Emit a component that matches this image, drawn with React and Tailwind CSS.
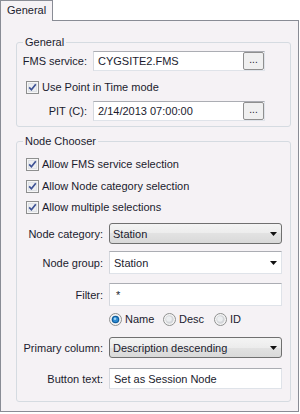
import React from 'react';

const CheckBox = () => (
  <svg width="13" height="13" viewBox="0 0 13 13" className="shrink-0">
    <rect x="0.5" y="0.5" width="12" height="12" fill="#f6f6f6" stroke="#8e8f8f" />
    <rect x="2" y="2" width="9" height="9" fill="#dfe2e7" />
    <rect x="3" y="3" width="7" height="7" fill="#eceef1" />
    <path d="M3.2 6.4 L5.4 8.8 L9.8 3.2" fill="none" stroke="#3d5295" strokeWidth="1.7" />
  </svg>
);

const Radio = ({ checked }) => (
  <svg width="13" height="13" viewBox="0 0 13 13" className="shrink-0">
    <circle cx="6.5" cy="6.5" r="6" fill="#f4f4f4" stroke="#8e8f8f" />
    {checked ? (
      <>
        <circle cx="6.5" cy="6.5" r="3.8" fill="#0f5d9e" />
        <circle cx="6.5" cy="6.5" r="2.6" fill="#2f8ad0" />
        <circle cx="6" cy="5.8" r="1.3" fill="#9fd6f7" />
      </>
    ) : (
      <>
        <circle cx="6.5" cy="6.5" r="4.2" fill="#d4d6da" />
        <circle cx="6" cy="6" r="2.8" fill="#eceef0" />
      </>
    )}
  </svg>
);

const Arrow = () => (
  <svg width="7" height="4" viewBox="0 0 7 4" className="mr-[4px] shrink-0">
    <polygon points="0,0 7,0 3.5,4" fill="#111" />
  </svg>
);

const Browse = () => (
  <div className="w-[21px] h-[18px] border border-[#8f8f8f] rounded-[2px] bg-[#f0f0f0] flex items-center justify-center text-[10px] leading-none pb-[2px]">
    ...
  </div>
);

const TextBox = ({ value, width, height, browse, pl = 'pl-[4px]' }) => (
  <div
    className={`${width} ${height} flex items-center bg-white border border-[#dfe3e9] border-t-[#abadb3] border-l-[#d5d8de]`}
  >
    <span className={`flex-1 ${pl} whitespace-nowrap`}>{value}</span>
    {browse && <Browse />}
  </div>
);

const Select = ({ value }) => (
  <div className="w-[173px] h-[21px] flex items-center rounded-[3px] border border-[#707070] bg-[linear-gradient(#f4f4f4,#ececec_50%,#e2e2e2_50%,#d9d9d9)]">
    <span className="flex-1 pl-[3px] whitespace-nowrap">{value}</span>
    <Arrow />
  </div>
);

const CheckRow = ({ label, className }) => (
  <div className={`${className} h-[14px] flex items-center pl-[9px]`}>
    <CheckBox />
    <span className="ml-[3px] whitespace-nowrap">{label}</span>
  </div>
);

const Field = ({ label, className, children }) => (
  <div className={`${className} flex items-center`}>
    <span className="w-[86px] text-right whitespace-nowrap">{label}</span>
    <div className="ml-[6px]">{children}</div>
  </div>
);

export default function App() {
  return (
    <div className="w-[300px] h-[414px] bg-white font-['Liberation_Sans',Arial,sans-serif] text-[11px] leading-[14px] text-[#1b1b2e]">
      {/* tab strip */}
      <div className="flex h-[20px]">
        <div className="relative z-10 h-[21px] w-[53px] border border-b-0 border-[#898c95] bg-[#f5f2f5] pl-[6px] pt-[2px]">
          General
        </div>
      </div>

      <div className="w-[299px] h-[392px] border border-[#898c95] bg-[#f5f2f5] pt-[14px]">
        {/* General group */}
        <fieldset className="ml-[15px] w-[275px] border border-[#d5dbe1] rounded-[3px] pb-[5px]">
          <legend className="ml-[6px] px-[2px]">General</legend>
          <div className="mt-[2px] flex items-center">
            <span className="w-[70px] text-right whitespace-nowrap">FMS service:</span>
            <div className="ml-[6px]">
              <TextBox value="CYGSITE2.FMS" width="w-[172px]" height="h-[20px]" browse />
            </div>
          </div>
          <CheckRow className="mt-[9px]" label="Use Point in Time mode" />
          <div className="mt-[7px] flex items-center">
            <span className="w-[70px] text-right whitespace-nowrap">PIT (C):</span>
            <div className="ml-[6px]">
              <TextBox value="2/14/2013 07:00:00" width="w-[172px]" height="h-[20px]" browse />
            </div>
          </div>
        </fieldset>

        {/* Node Chooser group */}
        <fieldset className="mt-[7px] ml-[15px] w-[275px] border border-[#d5dbe1] rounded-[3px] pb-[12px]">
          <legend className="ml-[6px] px-[2px]">Node Chooser</legend>
          <CheckRow className="mt-[9px]" label="Allow FMS service selection" />
          <CheckRow className="mt-[8px]" label="Allow Node category selection" />
          <CheckRow className="mt-[7px]" label="Allow multiple selections" />

          <Field className="mt-[9px]" label="Node category:">
            <Select value="Station" />
          </Field>

          <Field className="mt-[7px]" label="Node group:">
            <div className="w-[173px] h-[23px] flex items-center bg-white border border-[#dfe3e9] border-t-[#abadb3] border-l-[#d5d8de]">
              <span className="flex-1 pl-[4px]">Station</span>
              <Arrow />
            </div>
          </Field>

          <Field className="mt-[9px]" label="Filter:">
            <TextBox value="*" width="w-[173px]" height="h-[23px]" pl="pl-[6px]" />
          </Field>

          <div className="mt-[6px] h-[14px] flex items-center pl-[92px]">
            <div className="w-[54px] flex items-center">
              <Radio checked />
              <span className="ml-[3px]">Name</span>
            </div>
            <div className="w-[51px] flex items-center">
              <Radio />
              <span className="ml-[3px]">Desc</span>
            </div>
            <div className="flex items-center">
              <Radio />
              <span className="ml-[3px]">ID</span>
            </div>
          </div>

          <Field className="mt-[11px]" label="Primary column:">
            <Select value="Description descending" />
          </Field>

          <Field className="mt-[10px]" label="Button text:">
            <TextBox value="Set as Session Node" width="w-[173px]" height="h-[21px]" />
          </Field>
        </fieldset>
      </div>
    </div>
  );
}
